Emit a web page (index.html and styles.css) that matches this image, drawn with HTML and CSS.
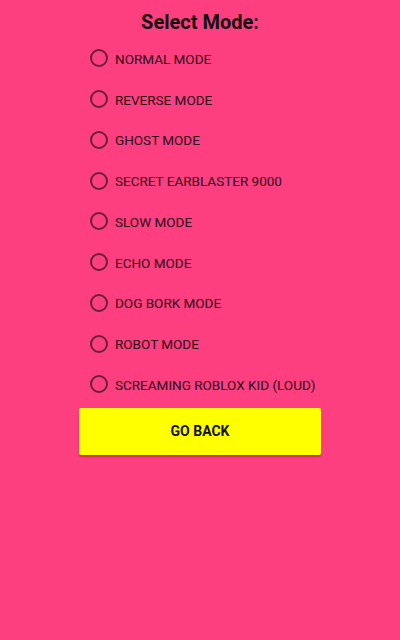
FILE: index.html
```html
<!DOCTYPE html>
<html>
<head>
<meta charset="utf-8">
<link rel="stylesheet" href="styles.css">
</head>
<body>
<div class="screen">
  <h1 class="title">Select Mode:</h1>
  <div class="modes">
    <label class="mode"><span class="radio"></span><span class="label">NORMAL MODE</span></label>
    <label class="mode"><span class="radio"></span><span class="label">REVERSE MODE</span></label>
    <label class="mode"><span class="radio"></span><span class="label">GHOST MODE</span></label>
    <label class="mode"><span class="radio"></span><span class="label">SECRET EARBLASTER 9000</span></label>
    <label class="mode"><span class="radio"></span><span class="label">SLOW MODE</span></label>
    <label class="mode"><span class="radio"></span><span class="label">ECHO MODE</span></label>
    <label class="mode"><span class="radio"></span><span class="label">DOG BORK MODE</span></label>
    <label class="mode"><span class="radio"></span><span class="label">ROBOT MODE</span></label>
    <label class="mode"><span class="radio"></span><span class="label">SCREAMING ROBLOX KID (LOUD)</span></label>
  </div>
  <button class="back">GO BACK</button>
</div>
</body>
</html>
```
FILE: styles.css
```css
html, body {
  margin: 0;
  padding: 0;
  background: #fe3f7f;
}
.screen {
  width: 400px;
  height: 640px;
  display: flex;
  flex-direction: column;
  align-items: center;
  font-family: Roboto, "Liberation Sans", sans-serif;
  color: #1a0a10;
}
.title {
  margin: 10px 0 0 0;
  font-size: 20px;
  font-weight: 700;
  line-height: 24px;
  color: #111;
}
.modes {
  align-self: flex-start;
  margin-left: 90px;
  margin-top: 4px;
  display: flex;
  flex-direction: column;
}
.mode {
  display: flex;
  align-items: center;
  height: 40.75px;
  gap: 7px;
}
.radio {
  width: 14px;
  height: 14px;
  border: 2px solid #6a1f3b;
  border-radius: 50%;
  flex: none;
}
.label {
  font-size: 13.5px;
  color: #2a0d18;
  padding-top: 1px;
}
.back {
  margin-top: 3px;
  width: 242px;
  height: 47px;
  background: #ffff00;
  border: none;
  border-radius: 2px;
  box-shadow: 0 2px 2px rgba(120, 30, 60, 0.45);
  font-family: Roboto, "Liberation Sans", sans-serif;
  font-size: 14px;
  font-weight: 700;
  color: #111;
  padding: 0;
}
```
